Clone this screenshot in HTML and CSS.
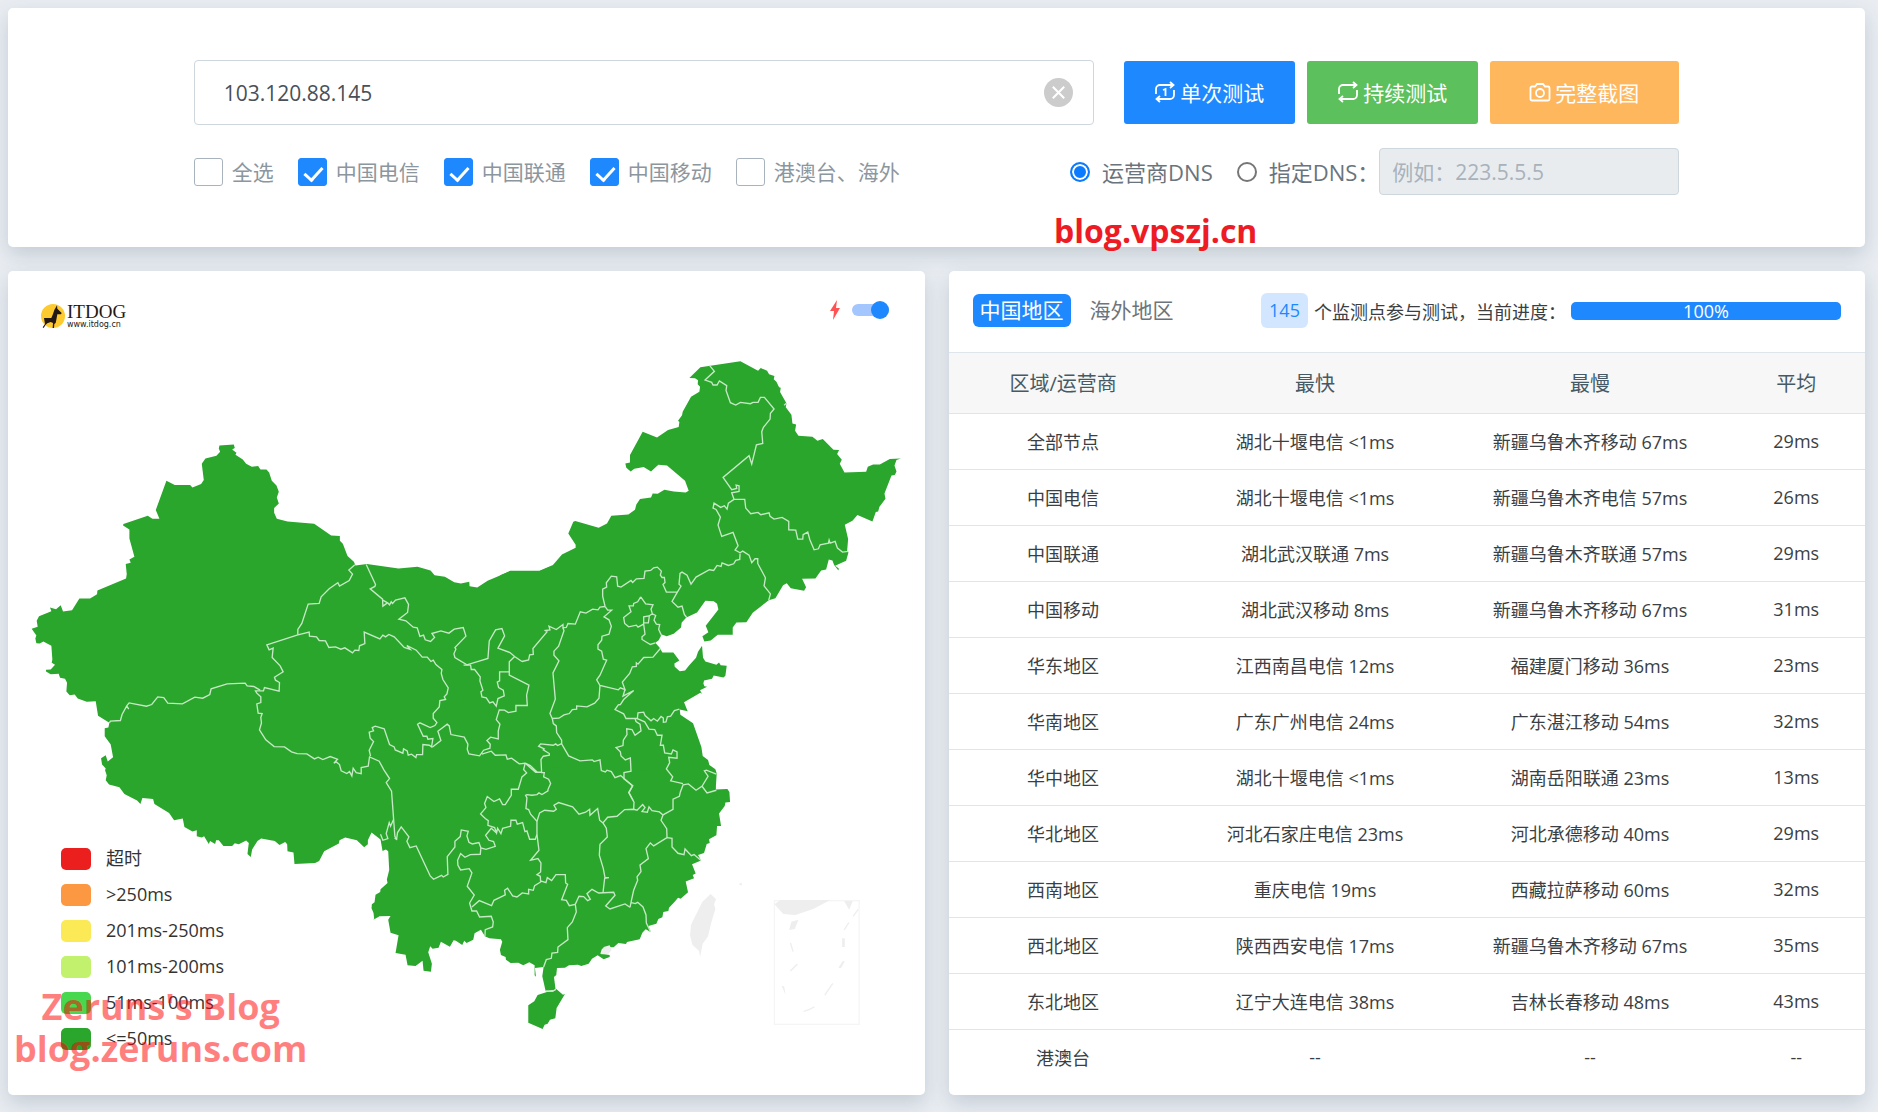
FILE: index.html
```html
<!DOCTYPE html>
<html lang="zh-CN">
<head>
  <meta charset="UTF-8">
  <meta name="viewport" content="width=device-width, initial-scale=1.0">
  <title>ITDOG - Ping 测试</title>
  <link rel="stylesheet" href="styles.css">
</head>
<body>

  <form class="card search-card">
    <div class="search-inner">
      <div class="search-row">
        <div class="host-box">
          <input type="text" class="host-input" id="host" value="103.120.88.145" aria-label="域名或IP">
          <button type="button" class="clear-btn" aria-label="清空">
            <svg viewBox="0 0 28 28"><circle cx="14" cy="14" r="14"/><path d="M8.500 8.500L19.500 19.500M19.500 8.500L8.500 19.500"/></svg>
          </button>
        </div>
        <div class="btn-group">
          <button type="button" class="btn btn-blue">
            <svg class="icon" viewBox="0 0 24 24"><path d="M7 5H20M17 2L20.500 5L17 8M17 19H4M7 16L3.500 19L7 22M3 14V9A4 4 0 0 1 7 5M21 10V15A4 4 0 0 1 17 19M10 10L12.500 9V16"/></svg>
            单次测试
          </button>
          <button type="button" class="btn btn-green">
            <svg class="icon" viewBox="0 0 24 24"><path d="M6 5H20M17 2L20.500 5L17 8M18 19H4M7 16L3.500 19L7 22M3 14V9A4 4 0 0 1 7 5M21 10V15A4 4 0 0 1 17 19"/></svg>
            持续测试
          </button>
          <button type="button" class="btn btn-orange">
            <svg class="icon" viewBox="0 0 24 24"><path d="M9 4H15L17 6.500H20A1.500 1.500 0 0 1 21.500 8V19A1.500 1.500 0 0 1 20 20.500H4A1.500 1.500 0 0 1 2.500 19V8A1.500 1.500 0 0 1 4 6.500H7Z"/><circle cx="12" cy="13" r="4"/></svg>
            完整截图
          </button>
        </div>
      </div>

      <div class="option-row">
        <div class="checks">
          <label class="check"><input type="checkbox">全选</label>
          <label class="check"><input type="checkbox" checked>中国电信</label>
          <label class="check"><input type="checkbox" checked>中国联通</label>
          <label class="check"><input type="checkbox" checked>中国移动</label>
          <label class="check"><input type="checkbox">港澳台、海外</label>
        </div>
        <div class="dns">
          <label class="radio"><input type="radio" name="dns" checked>运营商DNS</label>
          <label class="radio radio-custom"><input type="radio" name="dns">指定DNS：</label>
          <input type="text" class="dns-input" placeholder="例如：223.5.5.5" aria-label="指定DNS" disabled>
        </div>
      </div>
    </div>
    <div class="mark mark-top">blog.vpszj.cn</div>
  </form>

  <main class="panels">
    <section class="card map-card">
      <div class="map-head">
        <div class="logo">
          <svg class="logo-icon" viewBox="0 0 72 72">
            <circle cx="36" cy="36" r="36" fill="#fdcb2f"/>
            <path fill="#231815" d="M48 4L49 14L62 27L60 31L49 31L46 47L44 57L40 60L39 72L35 72L36 57L29 54L19 58L14 62L8 72L5 70L12 60L9 42L31 42L36 30L40 18Z"/>
          </svg>
          <div class="logo-text">
            <div class="logo-name">ITDOG</div>
            <div class="logo-url">www.itdog.cn</div>
          </div>
        </div>
        <label class="fast">
          <svg class="bolt" viewBox="0 0 10 20"><path d="M7 0L0 11H4L3 20L10 8H6Z"/></svg>
          <input type="checkbox" class="switch" aria-label="快速模式" checked>
        </label>
      </div>

      <svg class="map" viewBox="24 1023 2748 2262">
        <!-- land -->
        <g class="land">
          <path transform="translate(0 1260)" d="M658 76L701 73L704 84L696 88L709 98L706 104L728 118L738 131L755 140L774 138L781 148L799 148L807 157L815 182L829 196L836 215L830 232L836 250L822 264L822 278L830 296L862 304L942 311L993 346L1019 348L1019 362L1028 371L1042 408L1061 425L1066 436L1100 432L1195 445L1252 440L1291 451L1303 465L1334 470L1362 486L1382 490L1407 485L1408 498L1431 502L1462 482L1530 453L1618 453L1650 439L1650 1250L1114 1237L1103 1260L1103 1272L1092 1281L1070 1260L1035 1252L1018 1260L1016 1270L972 1293L957 1322L945 1328L883 1331L880 1297L862 1293L861 1272L855 1265L838 1274L824 1262L783 1255L772 1262L756 1288L752 1310L742 1301L746 1268L738 1261L716 1272L704 1269L696 1277L670 1277L656 1260L648 1260L645 1271L630 1262L626 1271L612 1248L605 1252L590 1248L590 1230L577 1234L553 1220L548 1195L522 1200L507 1178L463 1151L459 1136L427 1133L421 1151L411 1141L373 1121L358 1101L327 1093L317 1080L320 1065L315 1050L317 1045L306 1033L303 1014L317 1005L323 1024L339 1011L332 973L314 948L314 924L325 922L328 908L294 887L287 843L260 845L233 835L224 823L209 825L199 814L201 788L195 776L180 773L176 761L152 762L138 754L138 749L152 748L165 734L155 728L157 718L154 677L130 664L119 670L109 669L106 655L109 646L95 626L113 620L110 602L117 588L154 573L150 562L168 567L182 555L189 574L216 570L238 535L270 535L291 522L292 511L378 475L380 462L377 432L392 428L388 418L403 410L388 355L388 328L369 316L370 312L443 287L457 296L478 296L467 270L499 182L524 195L570 195L577 202L603 192L611 180L605 131L616 115L649 107L660 95L656 85Z"/>
          <path transform="translate(1500 1020)" d="M0 705L30 692L118 692L158 675L185 643L226 623L226 614L204 580L219 545L225 543L295 563L320 550L333 527L384 523L404 509L408 493L419 477L452 472L457 460L472 461L492 449L520 454L556 457L565 452L554 422L500 376L474 374L452 394L430 381L402 386L391 394L378 383L375 370L389 367L389 345L427 275L470 292L503 270L535 261L537 246L533 242L545 226L547 215L572 170L597 155L599 140L592 133L593 121L584 115L567 114L600 82L720 64L773 92L781 84L800 92L806 103L822 108L820 118L828 125L836 142L841 143L839 156L858 190L856 202L873 224L876 250L887 253L884 272L894 287L936 290L951 302L967 297L999 329L1016 330L1010 342L1024 359L1018 371L1032 397L1097 395L1102 380L1118 373L1138 373L1168 357L1201 355L1188 360L1182 376L1188 394L1183 405L1173 406L1166 424L1152 460L1155 476L1137 500L1133 514L1126 516L1116 544L1071 525L1056 542L1033 554L1043 597L1040 633L1044 637L1037 662L1004 677L1015 685L1014 691L1001 675L996 661L985 658L977 688L962 691L945 715L905 716L917 741L911 752L871 744L859 729L848 735L825 774L805 780L757 818L738 846L708 847L697 862L697 884L652 884L631 901L612 904L606 888L624 876L616 857L654 808L650 791L640 783L615 782L590 817L558 832L544 847L542 862L520 881L499 888L484 883L475 900L465 908L478 923L486 937L519 937L537 961L522 970L523 980L538 993L554 991L566 976L587 953L593 935L605 917L608 953L615 964L648 974L656 967L661 975L679 977L675 1007L669 1012L640 1006L635 1016L611 1021L609 1030L612 1038L620 1040L599 1050L605 1061L600 1058L551 1086L562 1113L538 1108L540 1124L578 1149L603 1220L607 1247L623 1259L627 1274L645 1287L649 1300L646 1346L648 1400L0 1400Z"/>
          <path transform="translate(1020 2220)" d="M1126 148L1161 146L1167 155L1169 185L1155 187L1153 197L1136 220L1142 257L1130 257L1128 285L1118 290L1106 297L1108 308L1099 311L1091 338L1073 344L1082 361L1055 372L1066 400L1057 404L1061 414L1036 424L1043 456L1021 475L1013 472L1003 484L986 502L984 512L969 515L966 531L954 536L948 550L924 557L931 575L916 567L906 577L898 597L860 605L857 611L834 608L820 621L806 621L785 625L780 640L808 644L808 650L790 657L772 645L755 655L745 670L723 677L713 673L686 675L674 682L650 683L648 704L641 710L646 748L616 752L606 708L610 680L584 683L587 709L583 705L583 675L567 666L549 675L534 667L511 668L497 658L496 650L482 644L479 628L486 604L482 597L447 594L434 588L422 568L403 579L399 598L379 608L372 601L366 614L347 601L340 600L329 619L302 604L295 622L277 625L270 618L264 636L275 670L272 694L250 691L247 661L226 677L202 675L196 643L166 638L175 585L151 577L144 538L151 527L118 528L97 540L102 536L100 518L94 504L95 492L103 486L106 463L120 455L121 447L142 428L140 418L147 389L144 333L137 328L127 332L121 298L94 277L94 60L1120 100Z"/>
          <path transform="translate(1020 2220)" d="M592 764L620 755L641 753L648 746L668 763L674 761L649 803L645 834L629 838L622 850L613 853L607 866L564 847L564 795L582 783Z"/>
        </g>

        <!-- no data -->
        <g class="empty">
          <path transform="translate(1020 2220)" d="M1111 461L1127 477L1121 492L1125 506L1113 546L1103 588L1087 610L1079 650L1076 632L1056 613L1049 585L1052 553L1086 484ZM1195 432L1204 427V436ZM790 620L808 615L814 628L805 640L783 642Z"/>
          <g transform="translate(2220 2580)">
            <rect class="sea-box" x="102" y="121" width="254" height="371"/>
            <path d="M102 132L120 119H270L218 146L165 164L129 161ZM311 122H337L326 148ZM153 184L174 178L163 206L146 209ZM305 234H313V260H305ZM124 378H131L136 404ZM306 303L313 302L302 323L294 322Z"/>
            <path class="dash" d="M353 147L338 168M325 187L311 209M150 248L158 274M171 311L150 332M277 369L253 404M222 439Q205 450 190 453"/>
          </g>
        </g>

        <!-- province borders -->
        <g class="border">
          <path transform="translate(0 1260)" d="M328 908L331 903L361 901L366 883L380 857L387 848L439 858L455 853L473 830L491 832L503 849L547 851L584 831L608 834L629 823L633 806L681 791L735 789L741 797L761 799L780 810M380 857L386 867"/>
          <g transform="translate(750 1560)">
            <path d="M314 134L296 150L307 162L297 181L268 198L263 188L237 206L213 230L207 250L174 252L155 310L143 328V344"/>
            <path d="M348 133L376 193L374 199L360 206L397 237L398 258L412 248L398 240M412 248L418 254L423 245L427 250L436 240L464 233L475 253L472 277L446 297L467 302L489 321L501 323L509 349L520 345L525 359L541 364L553 352L545 340L572 332L596 339L612 327L639 322L647 348L614 382L617 387L611 401L614 412L650 434L713 415L717 362L736 329L755 325L763 347L743 384L779 397L793 409L815 424"/>
            <path d="M143 344L177 336L178 348L199 350L207 361L226 362L236 382L256 380L272 387L284 383L307 398L314 390L326 391L328 377L344 370L342 336L389 356L398 345L406 350L416 343L432 350L462 382L480 388L470 376L498 390L516 411L531 411L542 424L549 420L557 433L575 448L573 460L578 478L594 503L590 521L582 530L586 538L569 541L567 560L549 580V594L560 607L554 616L540 622L509 608L502 612L519 648L530 648L533 657L548 655L544 680L537 675L518 673L517 703L499 703L497 712L484 702L474 705L471 692L460 686L458 699L435 689L432 680L418 673L402 626L375 618L366 622L370 632L357 636L360 654L370 664L357 690L361 708"/>
            <path d="M143 344L50 374L57 389L69 384L66 412L90 437L99 455L73 471L76 480L88 487L87 513L43 502L40 512L16 512L20 519L32 530V547L20 551L24 579L36 580L32 592L34 608L28 629L47 659L72 679L103 680L124 695L141 700L170 701L193 716L204 711L218 718L240 709L262 717L251 729L258 725L268 733L273 752L290 760L298 754L305 767L309 744L318 757L333 760V742L354 738L358 710L387 723L401 749L418 775L408 787L424 813L434 948L440 958"/>
            <path d="M640 435H661L663 448H673L690 470L689 482L698 510L692 515L695 530L708 533L718 548L728 545L738 558L743 535L762 527L759 510L745 502L741 486L748 482V455H777V465L836 495L829 525L831 556H797V573L774 577L763 570L747 569L738 598L749 612L744 632V656L721 651L710 661L720 672L719 684L700 690L688 707L656 701L651 687L653 672L642 651L602 643L597 617L591 612L563 633L572 661L546 681M777 455V425L793 409M695 702L723 693L735 705L767 704L771 717L784 714L807 731L825 729"/>
          </g>
          <g transform="translate(1500 1680)">
            <path d="M65 304L85 299L88 284L99 283L98 265L140 215L135 211L149 209L146 198L168 208L188 193V203L198 202L203 190L225 192L240 155L257 159L277 147L293 149L299 141L314 139"/>
            <path d="M188 203L191 212L175 258L161 273V285L176 302L158 338L165 417L149 460L156 475L176 474L191 464L207 460L216 448L229 447V437L260 440L283 429L296 414L299 376"/>
            <path d="M156 475L159 490L168 497L169 517L184 540V551L205 587L239 602L276 599L281 604L299 599L303 631L315 635L320 630L333 634L344 652L361 646L371 655"/>
            <path d="M314 139L322 150H334L311 170L326 179L333 198L326 222L305 228L304 240L293 254V267L304 273L309 297L319 300L299 345L289 359L299 376L354 389L360 383L374 388L366 366L388 340L396 320L408 319V308L413 312L430 292L458 291L480 265"/>
            <path d="M374 388L368 408L400 391L370 418L360 433L354 434L344 448L370 461L377 475H411L413 458L430 456L434 466L452 482L460 475L471 483L482 469L489 474V486L497 485L501 470L511 468L522 451L537 447"/>
            <path d="M404 475L407 484L419 492L422 512L404 525L395 508L379 506L380 523L369 540L368 556L347 562L360 575L362 587L375 599L390 593L392 633L371 637V655L397 676L386 697L398 720"/>
            <path d="M411 475L433 485L446 507L463 508L471 525L485 525L480 555L489 555L493 578L513 581L518 569L530 575V594L505 591L508 607L498 626L517 650L511 662L548 670"/>
            <path d="M75 609L106 636H124L122 598L129 588L147 585V580L129 569L132 566L115 558L121 551L159 555L166 551L172 556L184 550M75 609L90 616L112 637"/>
          </g>
          <g transform="translate(1500 1020)">
            <path d="M314 798L307 768V747L319 741L318 728L333 708L349 710L352 738L362 741L392 721L397 727L408 716L431 715L434 693L451 691L460 683L471 681L483 693L480 705L485 712H492L494 727L488 733L498 756H531L542 738L536 732L539 700L545 696L560 705L572 732L587 711L627 689L640 691L650 676L662 679L665 668L684 676L700 671L706 661L718 658L719 640M531 756L515 784L533 801L545 798L552 823L559 832"/>
            <path d="M421 770L436 791L458 794L452 807L456 821L466 826L461 840L468 852L478 853L475 868L483 885M421 770L412 785L400 790L399 797H386L392 815L370 832L373 850L385 860L408 855L413 861L430 852L434 882L425 890V898L450 913L465 908M430 848V830L447 827L444 848ZM447 827L456 821"/>
            <path d="M719 638L727 633L746 645L754 668L764 656H772V670L795 713L791 737L810 761L805 780M719 638L704 630L713 617L698 577L664 589L653 555L660 531L647 508L638 504L641 489L661 502L672 497L680 507L684 489L701 478"/>
            <path d="M628 77L642 94L614 120L634 127L638 135H650L657 123L679 137L677 151L690 188L706 195L720 187L750 191L758 187H773L780 172H792L821 207L810 220L809 237L789 262L784 275L787 310L768 314L754 372L746 347L668 412L694 449L709 445L707 435L716 437V454L694 458L701 478"/>
            <path d="M701 478H733L736 504L751 521L773 517L781 524L806 518L809 529L821 537L845 532L865 544V569L886 570L892 597H907L908 584L922 576L928 598L941 629L954 626L959 614L984 609L986 600L989 609L1004 604L1011 624L1026 636L1044 634M851 196L858 190"/>
          </g>
          <g transform="translate(1020 2220)">
            <path d="M555 68L550 88L559 98L545 110L534 147H513V165L495 193H487L478 176L461 184L441 169L433 190L437 202L421 221L435 235L444 241L443 255L463 262L469 278L472 264L482 280L487 264L511 258L512 240H527L531 252L547 247L554 274L560 272L568 297H585L590 283V243L571 222L565 208L557 205L560 173L556 165L560 163L575 165L590 163L596 158L605 163L623 152V148L631 130L625 117L610 110L612 97H602"/>
            <path d="M121 282L128 300L143 295L138 280L147 247L151 258L160 238M163 293L169 297L172 277L183 260L206 290L200 303L209 322L228 317L248 360L270 407L280 417L304 405L309 410L323 402L321 349L344 320V303L360 289L363 269L384 273L380 287L386 306L396 311L416 307L422 323L437 327L465 318L460 304L446 300L436 285L453 264L469 278"/>
            <path d="M422 323L420 342L390 343L374 351L361 340L352 360L353 375L361 389L387 385L395 398L381 438L402 464L388 488L395 512H409L418 530L453 528L459 545L457 560L435 568L434 588"/>
            <path d="M395 500L417 481L454 496L461 480L495 464L493 450L502 444L517 467L530 470L546 458L565 461V447L579 450L583 436L601 425L600 408L590 403L601 395L602 368L593 355L571 360L596 330L590 283M601 422L617 427L621 412L634 421L647 403H675L676 428L682 432L664 478L678 480L687 496L705 492"/>
            <path d="M590 243L598 218L613 210L640 213L648 207L641 195L655 187L697 200L716 222L736 216L748 207L749 225L772 205L778 240L788 248L798 264L801 290L779 312L777 345L789 385L794 412H806L793 414L788 458"/>
            <path d="M705 492L716 468L730 469L742 481L750 477L740 460L755 447L775 458L820 456L824 465L796 497L809 506L854 491L869 501M705 492L708 515L696 545L681 562L683 598L653 620L652 636L635 638L633 654L618 658L610 680M616 752L636 753L647 747"/>
            <path d="M788 248L802 231L830 228L853 208L880 207L890 210L907 193L914 202L905 214L921 216L926 200L935 211L957 215L968 224L962 240L979 265L980 292L940 317L930 308L917 325L924 355L899 374L902 394L890 410L892 420L880 450L873 482L869 501M873 487L885 490L892 486L908 500L917 524L918 548L931 575"/>
            <path d="M850 115L877 137L865 157L881 186L880 207M980 292L995 294V320L1013 339L1031 343L1034 326L1053 346L1061 343L1082 361M968 224L998 207V177L1017 168L1020 155L1028 134L1044 131L1067 150L1085 138L1100 158L1128 150M1085 138L1103 108L1092 92L1098 90L1128 102"/>
          </g>
        </g>
      </svg>

      <ul class="legend">
        <li><span class="swatch timeout"></span>超时</li>
        <li><span class="swatch over250"></span>&gt;250ms</li>
        <li><span class="swatch ms250"></span>201ms-250ms</li>
        <li><span class="swatch ms200"></span>101ms-200ms</li>
        <li><span class="swatch ms100"></span>51ms-100ms</li>
        <li><span class="swatch ms50"></span>&lt;=50ms</li>
      </ul>
      <div class="mark mark-bottom">Zeruns's Blog<br>blog.zeruns.com</div>
    </section>

    <section class="card result-card">
      <div class="result-head">
        <div class="tabs">
          <button type="button" class="tab active">中国地区</button>
          <button type="button" class="tab">海外地区</button>
        </div>
        <div class="status">
          <span class="badge">145</span>
          <span class="status-text">个监测点参与测试，当前进度：</span>
          <div class="progress" role="progressbar" aria-label="当前进度" aria-valuenow="100"><div class="progress-bar" style="width: 100%">100%</div></div>
        </div>
      </div>
      <table class="result-table">
        <thead>
          <tr><th class="col-area">区域/运营商</th><th class="col-node">最快</th><th class="col-node">最慢</th><th class="col-avg">平均</th></tr>
        </thead>
        <tbody>
          <tr><td>全部节点</td><td>湖北十堰电信 &lt;1ms</td><td>新疆乌鲁木齐移动 67ms</td><td>29ms</td></tr>
          <tr><td>中国电信</td><td>湖北十堰电信 &lt;1ms</td><td>新疆乌鲁木齐电信 57ms</td><td>26ms</td></tr>
          <tr><td>中国联通</td><td>湖北武汉联通 7ms</td><td>新疆乌鲁木齐联通 57ms</td><td>29ms</td></tr>
          <tr><td>中国移动</td><td>湖北武汉移动 8ms</td><td>新疆乌鲁木齐移动 67ms</td><td>31ms</td></tr>
          <tr><td>华东地区</td><td>江西南昌电信 12ms</td><td>福建厦门移动 36ms</td><td>23ms</td></tr>
          <tr><td>华南地区</td><td>广东广州电信 24ms</td><td>广东湛江移动 54ms</td><td>32ms</td></tr>
          <tr><td>华中地区</td><td>湖北十堰电信 &lt;1ms</td><td>湖南岳阳联通 23ms</td><td>13ms</td></tr>
          <tr><td>华北地区</td><td>河北石家庄电信 23ms</td><td>河北承德移动 40ms</td><td>29ms</td></tr>
          <tr><td>西南地区</td><td>重庆电信 19ms</td><td>西藏拉萨移动 60ms</td><td>32ms</td></tr>
          <tr><td>西北地区</td><td>陕西西安电信 17ms</td><td>新疆乌鲁木齐移动 67ms</td><td>35ms</td></tr>
          <tr><td>东北地区</td><td>辽宁大连电信 38ms</td><td>吉林长春移动 48ms</td><td>43ms</td></tr>
          <tr><td>港澳台</td><td>--</td><td>--</td><td>--</td></tr>
        </tbody>
      </table>
    </section>
  </main>

</body>
</html>
```
FILE: styles.css
```css
* {
  box-sizing: border-box;
}

body {
  margin: 0;
  padding: 8px 13px 17px 8px;
  background-color: #e9edf2;
  font-family: "Open Sans", "Noto Sans CJK SC", sans-serif;
  font-size: 18px;
  color: #3b3f43;
}

input,
button {
  font-family: inherit;
}

button {
  cursor: pointer;
}

.card {
  position: relative;
  background-color: #fff;
  border-radius: 5px;
  box-shadow: 0 8px 20px rgba(52, 77, 96, 0.2);
}

/* search form */
.search-card {
  padding: 52px 0;
  margin-bottom: 24px;
}

.search-inner {
  width: 80%;
  margin: 0 auto;
}

.search-row {
  display: flex;
  align-items: center;
  gap: 30px;
  margin-bottom: 23px;
}

.host-box {
  position: relative;
  flex: 1;
}

.host-input {
  display: block;
  width: 100%;
  height: 65px;
  padding: 0 80px 0 29px;
  border: 1px solid #ced6de;
  border-radius: 4px;
  font-size: 21px;
  color: #495057;
}

.clear-btn {
  position: absolute;
  top: 18px;
  right: 21px;
  width: 29px;
  height: 29px;
  padding: 0;
  border: none;
  background: none;
}

.clear-btn svg {
  display: block;
  fill: #ccc;
}

.clear-btn path {
  stroke: #fff;
  stroke-width: 2;
}

.btn-group {
  display: flex;
  gap: 12px;
}

.btn {
  display: flex;
  align-items: center;
  justify-content: center;
  gap: 3px;
  width: 171px;
  height: 63px;
  padding: 0 2px 2px 0;
  border: none;
  border-radius: 3px;
  font-size: 21px;
  color: #fff;
}

.btn-blue {
  background-color: #1e88ff;
}

.btn-green {
  background-color: #5cc05c;
}

.btn-orange {
  width: 189px;
  background-color: #ffb75e;
}

.icon {
  width: 24px;
  height: 24px;
  fill: none;
  stroke: #fff;
  stroke-width: 1.8;
}

.option-row {
  display: flex;
  align-items: center;
  justify-content: space-between;
  font-size: 21px;
}

.checks,
.dns {
  display: flex;
  align-items: center;
}

.checks {
  gap: 24px;
}

.check,
.radio {
  display: flex;
  align-items: center;
  line-height: 28px;
  white-space: nowrap;
}

.check {
  gap: 9px;
  color: #8c969e;
}

.check input {
  position: relative;
  appearance: none;
  width: 29px;
  height: 28px;
  margin: 0;
  border: 1px solid #a9b3bd;
  border-radius: 3px;
}

.check input:checked {
  border-color: #1e88ff;
  background-color: #1e88ff;
}

.check input:checked::after {
  content: "";
  position: absolute;
  top: 4px;
  left: 9px;
  width: 8px;
  height: 15px;
  border: solid #fff;
  border-width: 0 3px 3px 0;
  transform: rotate(42deg);
}

.radio {
  gap: 12px;
  margin-right: 24px;
  font-size: 22px;
  color: #6a747d;
}

.radio-custom {
  margin-right: 0;
}

.radio input {
  appearance: none;
  width: 20px;
  height: 20px;
  margin: 0;
  border: 2px solid #767676;
  border-radius: 50%;
}

.radio input:checked {
  border-color: #0a7bff;
  background-color: #0a7bff;
  box-shadow: inset 0 0 0 2px #fff;
}

.dns-input {
  width: 300px;
  height: 47px;
  padding: 0 12px;
  border: 1px solid #ced6de;
  border-radius: 4px;
  background-color: #e8ecef;
  font-size: 21px;
}

.dns-input::placeholder {
  color: #a9b2bb;
}

/* watermarks */
.mark {
  position: absolute;
  font-weight: bold;
  text-align: center;
  white-space: nowrap;
}

.mark-top {
  bottom: -5px;
  left: 1046px;
  font-size: 32px;
  line-height: 42px;
  color: #ed1c24;
}

.mark-bottom {
  bottom: 25px;
  left: 6px;
  font-size: 36px;
  line-height: 42px;
  color: rgba(255, 0, 0, 0.5);
}

/* panels */
.panels {
  display: grid;
  grid-template-columns: 1fr 1fr;
  gap: 24px;
}

.map-head {
  display: flex;
  align-items: flex-start;
  justify-content: space-between;
  height: 70px;
  padding: 29px 36px 0 33px;
}

.logo {
  display: flex;
  gap: 2px;
  color: #231815;
}

.logo-icon {
  width: 24px;
  height: 24px;
  margin-top: 4px;
}

.logo-name {
  margin-top: 2px;
  font-family: "Liberation Serif", serif;
  font-size: 19px;
  line-height: 20px;
}

.logo-url {
  font-family: "DejaVu Sans", sans-serif;
  font-size: 8px;
  line-height: 6px;
}

.fast {
  display: flex;
  align-items: center;
  gap: 12px;
}

.bolt {
  width: 10px;
  height: 20px;
  fill: #ff5252;
}

.switch {
  position: relative;
  appearance: none;
  width: 37px;
  height: 12px;
  margin: 0;
  border-radius: 6px;
  background-color: #a3c6ff;
}

.switch::after {
  content: "";
  position: absolute;
  top: -3px;
  right: 0;
  width: 18px;
  height: 18px;
  border-radius: 50%;
  background-color: #1e88ff;
}

.map {
  display: block;
  width: 100%;
}

.land {
  fill: #2aa62c;
}

.empty {
  fill: #eee;
}

.sea-box {
  fill: none;
  stroke: #f5f5f5;
  stroke-width: 4;
}

.dash {
  fill: none;
  stroke: #eee;
  stroke-width: 4;
}

.border {
  fill: none;
  stroke: #c6e9c5;
  stroke-width: 4;
}

.legend {
  position: absolute;
  bottom: 45px;
  left: 53px;
  display: flex;
  flex-direction: column;
  gap: 14px;
  margin: 0;
  padding: 0;
  list-style: none;
  line-height: 20px;
  color: #333;
}

.legend li {
  display: flex;
  gap: 15px;
}

.swatch {
  width: 30px;
  height: 22px;
  border-radius: 5px;
}

.timeout {
  background-color: #ec1f1f;
}

.over250 {
  background-color: #fc9842;
}

.ms250 {
  background-color: #fbe955;
}

.ms200 {
  background-color: #c2f26d;
}

.ms100 {
  background-color: #48d84f;
}

.ms50 {
  background-color: #2aa62c;
}

/* results */
.result-head {
  display: flex;
  align-items: center;
  justify-content: space-between;
  height: 81px;
  padding: 0 24px 2px;
}

.tabs,
.status {
  display: flex;
  align-items: center;
}

.tabs {
  gap: 12px;
}

.tab {
  height: 33px;
  padding: 0 7px;
  border: none;
  border-radius: 6px;
  background: none;
  font-size: 21px;
  line-height: 33px;
  color: #6c757d;
}

.tab.active {
  background-color: #1e88ff;
  color: #fff;
}

.badge {
  width: 47px;
  margin-right: 6px;
  border-radius: 6px;
  background-color: #d2e7ff;
  line-height: 35px;
  text-align: center;
  color: #1e88ff;
}

.status-text {
  margin-right: 5px;
  white-space: nowrap;
}

.progress {
  width: 270px;
  height: 18px;
  border-radius: 5px;
  background-color: #e9ecef;
}

.progress-bar {
  height: 18px;
  border-radius: 5px;
  background-color: #1e88ff;
  line-height: 18px;
  text-align: center;
  color: #fff;
}

.result-table {
  width: 100%;
  border-collapse: collapse;
  table-layout: fixed;
  text-align: center;
}

.result-table th {
  height: 61px;
  padding: 0 0 2px;
  border-top: 1px solid #dee5ec;
  background-color: #f7f7f7;
  font-size: 20px;
  font-weight: normal;
  color: #465a65;
}

.result-table td {
  height: 56px;
  padding: 0 0 2px;
  border-top: 1px solid #dee5ec;
}

.col-area {
  width: 25%;
}

.col-node {
  width: 30%;
}

.col-avg {
  width: 15%;
}
```
